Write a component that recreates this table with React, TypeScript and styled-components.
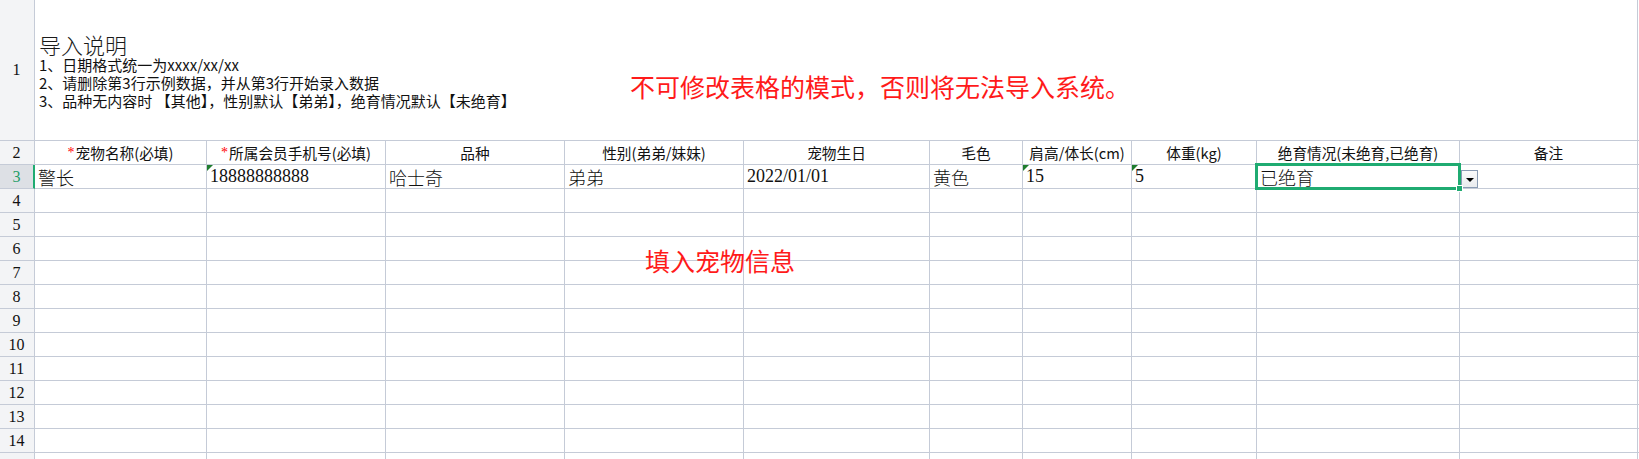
import React from 'react';
import styled, { createGlobalStyle } from 'styled-components';

const GRID = '#c5cbd7';
const GREEN = '#1fab71';

const GlobalStyle = createGlobalStyle`
  html, body { margin: 0; padding: 0; background: #ffffff; }
  body { font-family: "Noto Sans CJK SC", sans-serif; color: #111; }
`;

const COLS = [172, 179, 179, 179, 186, 93, 109, 125, 203, 178];

const Sheet = styled.div`
  position: relative;
  width: 1639px;
  height: 459px;
  overflow: hidden;
  display: grid;
  grid-template-columns: 35px ${COLS.map((c) => `${c}px`).join(' ')} 1fr;
  grid-template-rows: 141px repeat(14, 24px) 24px;
  align-content: start;
  background: #fff;
`;

const RowHeader = styled.div<{ $active?: boolean }>`
  box-sizing: border-box;
  display: flex;
  align-items: center;
  justify-content: center;
  background: ${(p) => (p.$active ? '#dde0e5' : '#f3f4f6')};
  border-right: ${(p) => (p.$active ? `2px solid ${GREEN}` : `1px solid ${GRID}`)};
  border-bottom: 1px solid ${GRID};
  font-family: "Liberation Serif", "Noto Sans CJK SC", serif;
  font-size: 16px;
  color: ${(p) => (p.$active ? '#1f9d68' : '#111')};
  padding-right: ${(p) => (p.$active ? '0px' : '1px')};
`;

const Merged = styled.div`
  box-sizing: border-box;
  grid-column: 2 / span 10;
  border-right: 1px solid ${GRID};
  border-bottom: 1px solid ${GRID};
  padding: 32px 0 0 4px;
`;

const Title = styled.div`
  font-size: 22px;
  line-height: 24px;
  font-weight: 300;
  color: #1a1a1a;
`;

const Note = styled.div`
  font-size: 15px;
  line-height: 18px;
  color: #111;
  white-space: nowrap;
`;

const Cell = styled.div<{ $center?: boolean; $header?: boolean; $selected?: boolean; $flag?: boolean }>`
  position: relative;
  box-sizing: border-box;
  border-right: 1px solid ${GRID};
  border-bottom: 1px solid ${GRID};
  display: flex;
  align-items: center;
  justify-content: ${(p) => (p.$center ? 'center' : 'flex-start')};
  padding-left: ${(p) => (p.$center ? '0' : '3px')};
  white-space: nowrap;
  font-family: ${(p) =>
    p.$header ? '"Noto Sans CJK SC", sans-serif' : '"Liberation Serif", "Noto Sans CJK SC", serif'};
  font-size: ${(p) => (p.$header ? '14.67px' : '18px')};
  font-weight: ${(p) => (p.$header ? 400 : 300)};
  color: #111;
  z-index: ${(p) => (p.$selected ? 3 : 'auto')};

  ${(p) =>
    p.$flag
      ? `&::before {
    content: '';
    position: absolute;
    left: 0;
    top: 0;
    width: 0;
    height: 0;
    border-top: 6px solid #1f7d2e;
    border-right: 6px solid transparent;
  }`
      : ''}

  ${(p) =>
    p.$selected
      ? `&::after {
    content: '';
    position: absolute;
    left: -2px;
    top: -2px;
    right: -2px;
    bottom: -2px;
    border: 3px solid ${GREEN};
    pointer-events: none;
  }`
      : ''}
`;

const Filler = styled.div`
  border-bottom: 1px solid ${GRID};
`;

const Star = styled.span`
  color: #ff0000;
  font-family: "Liberation Serif", serif;
  font-size: 14px;
  margin-right: 1px;
`;

const Handle = styled.span`
  position: absolute;
  right: -4px;
  bottom: -4px;
  width: 5px;
  height: 5px;
  background: ${GREEN};
  border: 1px solid #fff;
  box-sizing: content-box;
  z-index: 4;
`;

const DropButton = styled.span`
  position: absolute;
  left: calc(100% + 2px);
  top: 5px;
  width: 17px;
  height: 18px;
  box-sizing: border-box;
  border: 1px solid #8a9bb3;
  background: linear-gradient(#fbfbfb, #e9ebee);
  display: flex;
  align-items: center;
  justify-content: center;

  &::after {
    content: '';
    width: 0;
    height: 0;
    border-left: 4px solid transparent;
    border-right: 4px solid transparent;
    border-top: 4px solid #000;
    margin-top: 1px;
  }
`;

const FloatText = styled.div<{ $left: number; $top: number }>`
  position: absolute;
  left: ${(p) => p.$left}px;
  top: ${(p) => p.$top}px;
  font-family: "Noto Sans CJK SC", sans-serif;
  font-size: 25px;
  line-height: 25px;
  color: #ff1a1a;
  white-space: nowrap;
  z-index: 5;
`;

const HEADERS: { text: string; required?: boolean }[] = [
  { text: '宠物名称(必填)', required: true },
  { text: '所属会员手机号(必填)', required: true },
  { text: '品种' },
  { text: '性别(弟弟/妹妹)' },
  { text: '宠物生日' },
  { text: '毛色' },
  { text: '肩高/体长(cm)' },
  { text: '体重(kg)' },
  { text: '绝育情况(未绝育,已绝育)' },
  { text: '备注' },
];

const SAMPLE = ['警长', '18888888888', '哈士奇', '弟弟', '2022/01/01', '黄色', '15', '5', '已绝育', ''];
const FLAGGED = [1, 6, 7];
const SELECTED = 8;

export default function App() {
  const emptyRows = Array.from({ length: 12 }, (_, i) => i + 4);
  return (
    <>
      <GlobalStyle />
      <Sheet>
        <RowHeader>1</RowHeader>
        <Merged>
          <Title>导入说明</Title>
          <Note>1、日期格式统一为xxxx/xx/xx</Note>
          <Note>2、请删除第3行示例数据，并从第3行开始录入数据</Note>
          <Note>3、品种无内容时 【其他】，性别默认【弟弟】，绝育情况默认【未绝育】</Note>
        </Merged>
        <Filler />

        <RowHeader>2</RowHeader>
        {HEADERS.map((h) => (
          <Cell key={h.text} $center $header>
            {h.required && <Star>*</Star>}
            {h.text}
          </Cell>
        ))}
        <Filler />

        <RowHeader $active>3</RowHeader>
        {SAMPLE.map((v, i) => (
          <Cell key={i} $flag={FLAGGED.includes(i)} $selected={i === SELECTED}>
            {v}
            {i === SELECTED && (
              <>
                <Handle />
                <DropButton />
              </>
            )}
          </Cell>
        ))}
        <Filler />

        {emptyRows.map((r) => (
          <React.Fragment key={r}>
            <RowHeader>{r < 15 ? r : ''}</RowHeader>
            {COLS.map((_, i) => (
              <Cell key={i} />
            ))}
            <Filler />
          </React.Fragment>
        ))}

        <FloatText $left={630} $top={74}>不可修改表格的模式，否则将无法导入系统。</FloatText>
        <FloatText $left={645} $top={248}>填入宠物信息</FloatText>
      </Sheet>
    </>
  );
}
